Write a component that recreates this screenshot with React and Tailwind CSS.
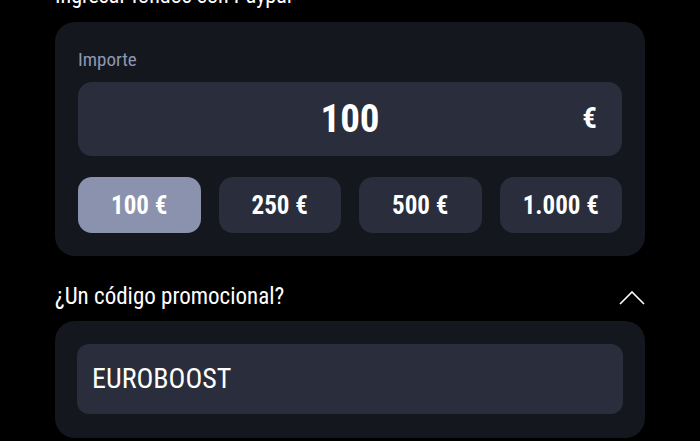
const amounts = ["100 €", "250 €", "500 €", "1.000 €"];

export default function App() {
  const font = { fontFamily: '"Liberation Sans Narrow", "Roboto Condensed", "DejaVu Sans Condensed", sans-serif' };
  return (
    <div className="w-[700px] h-[441px] overflow-hidden bg-black text-white" style={font}>
      <div className="px-[55px] -mt-[17px]">
        <h2 className="text-[22px] leading-[26px] h-[39px]">Ingresar fondos con Paypal</h2>
        <div className="rounded-[20px] bg-[#15171f] px-[23px] pt-[24px] pb-[23px]">
          <div className="text-[19px] leading-[28px] text-[#8f97b0]">Importe</div>
          <div className="mt-[8px] h-[74px] rounded-[14px] bg-[#2a2d3c] relative flex items-center justify-center">
            <span className="text-[39px] font-bold">100</span>
            <span className="absolute right-[25px] text-[29px] font-bold">€</span>
          </div>
          <div className="mt-[21px] grid grid-cols-4 gap-[18px]">
            {amounts.map((a, i) => (
              <button
                key={a}
                className={`h-[56px] rounded-[14px] pt-[2px] text-[25px] font-bold text-white ${i === 0 ? "bg-[#8a92ad]" : "bg-[#2a2d3c]"}`}
              >
                {a}
              </button>
            ))}
          </div>
        </div>
        <div className="mt-[22px] h-[39px] flex items-center justify-between">
          <span className="text-[23px]">¿Un código promocional?</span>
          <svg width="26" height="14" viewBox="0 0 26 14" fill="none" stroke="white" strokeWidth="1.6">
            <polyline points="1,13 13,1 25,13" />
          </svg>
        </div>
        <div className="mt-[4px] rounded-[20px] bg-[#15171f] px-[22px] pt-[23px] pb-[24px]">
          <div className="h-[70px] rounded-[12px] bg-[#2a2d3c] flex items-center px-[15px] text-[28px]">
            EUROBOOST
          </div>
        </div>
      </div>
    </div>
  );
}
